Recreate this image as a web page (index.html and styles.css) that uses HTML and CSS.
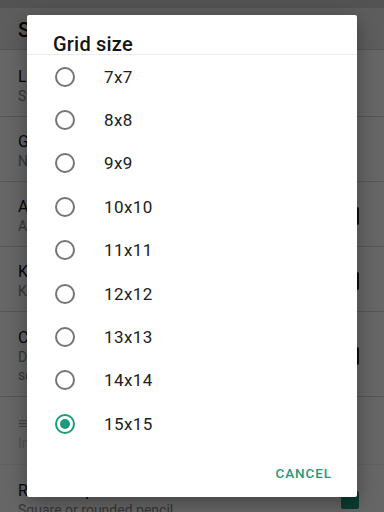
FILE: index.html
```html
<!DOCTYPE html>
<html>
<head>
<meta charset="utf-8">
<link rel="stylesheet" href="styles.css">
</head>
<body>
<div class="page">
  <div class="statusbar"></div>
  <div class="appbar">Settings</div>
  <div class="row first">
    <div class="texts"><div class="t">Language</div><div class="s">System default</div></div>
  </div>
  <div class="row">
    <div class="texts"><div class="t">Grid size</div><div class="s">Number of cells</div></div>
  </div>
  <div class="row">
    <div class="texts"><div class="t">Auto check</div><div class="s">Automatically check</div></div>
    <div class="cb"></div>
  </div>
  <div class="row">
    <div class="texts"><div class="t">Keep screen on</div><div class="s">Keep the screen awake</div></div>
    <div class="cb"></div>
  </div>
  <div class="row tall">
    <div class="texts"><div class="t">Color hints</div><div class="s">Display hints in color while the puzzle is being solved at random</div></div>
    <div class="cb"></div>
  </div>
  <div class="row disabled">
    <div class="texts"><div class="t">≡ Line width</div><div class="s">Inactive option</div></div>
  </div>
  <div class="row last">
    <div class="texts"><div class="t">Rounded pencil</div><div class="s">Square or rounded pencil</div></div>
    <div class="cb on"></div>
  </div>
</div>
<div class="scrim"></div>
<div class="dialog">
  <div class="title">Grid size</div>
  <div class="list">
    <div class="opt"><span class="radio"></span><span class="lbl">7x7</span></div>
    <div class="opt"><span class="radio"></span><span class="lbl">8x8</span></div>
    <div class="opt"><span class="radio"></span><span class="lbl">9x9</span></div>
    <div class="opt"><span class="radio"></span><span class="lbl">10x10</span></div>
    <div class="opt"><span class="radio"></span><span class="lbl">11x11</span></div>
    <div class="opt"><span class="radio"></span><span class="lbl">12x12</span></div>
    <div class="opt"><span class="radio"></span><span class="lbl">13x13</span></div>
    <div class="opt"><span class="radio"></span><span class="lbl">14x14</span></div>
    <div class="opt"><span class="radio checked"></span><span class="lbl">15x15</span></div>
  </div>
  <div class="actions"><span class="btn">CANCEL</span></div>
</div>
</body>
</html>
```
FILE: styles.css
```css
* { box-sizing: border-box; }
html, body { margin: 0; padding: 0; }
body {
  width: 384px;
  height: 512px;
  overflow: hidden;
  font-family: Roboto, "Liberation Sans", sans-serif;
  background: #ffffff;
  position: relative;
}
.page { width: 384px; }
.statusbar { height: 8px; background: #d0d0d0; }
.appbar {
  height: 42px;
  background: #e9e9e9;
  padding: 10px 18px 0;
  font-size: 20px;
  font-weight: 500;
  color: #000;
  border-bottom: 1px solid #cfcfcf;
}
.row {
  display: flex;
  align-items: center;
  padding: 14px 25px 10px 18px;
  border-bottom: 1px solid #d8d8d8;
  height: 65px;
}
.row.first { height: 67px; padding-top: 16px; }
.row.tall { height: 85px; }
.row.disabled { height: 68px; opacity: 0.4; }
.row.last { border-bottom: none; }
.texts { flex: 1; min-width: 0; }
.t { font-size: 16px; line-height: 20px; color: #111; }
.s { font-size: 14px; line-height: 18px; color: #8a8a8a; }
.cb {
  width: 18px;
  height: 18px;
  border: 2px solid #222;
  border-radius: 2px;
  margin-left: 16px;
}
.cb.on { background: #1f9a7c; border-color: #1f9a7c; }
.scrim {
  position: absolute;
  inset: 0;
  background: rgba(0, 0, 0, 0.6);
}
.dialog {
  position: absolute;
  left: 27px;
  top: 15px;
  width: 330px;
  height: 482px;
  background: #fff;
  border-radius: 2px;
  box-shadow: 0 6px 20px rgba(0, 0, 0, 0.35);
  display: flex;
  flex-direction: column;
}
.title {
  height: 40px;
  padding: 19px 0 0 26px;
  font-size: 20px;
  font-weight: 500;
  color: #141414;
  line-height: 21px;
  letter-spacing: 0.2px;
  border-bottom: 1px solid #ececec;
}
.list { display: flex; flex-direction: column; }
.opt {
  height: 43.4px;
  display: flex;
  align-items: center;
  padding-left: 28px;
}
.radio {
  width: 20px;
  height: 20px;
  border: 2px solid #757575;
  border-radius: 50%;
  flex: none;
  position: relative;
}
.radio.checked { border-color: #1f9a7c; }
.radio.checked::after {
  content: "";
  position: absolute;
  left: 3px;
  top: 3px;
  width: 10px;
  height: 10px;
  border-radius: 50%;
  background: #1f9a7c;
}
.lbl {
  margin-left: 29px;
  font-size: 17px;
  color: #202020;
  letter-spacing: 0.4px;
}
.actions {
  display: flex;
  justify-content: flex-end;
  padding: 19px 25px 0 0;
}
.btn {
  font-size: 13.5px;
  font-weight: 500;
  letter-spacing: 0.9px;
  color: #1f9a7c;
}
```
